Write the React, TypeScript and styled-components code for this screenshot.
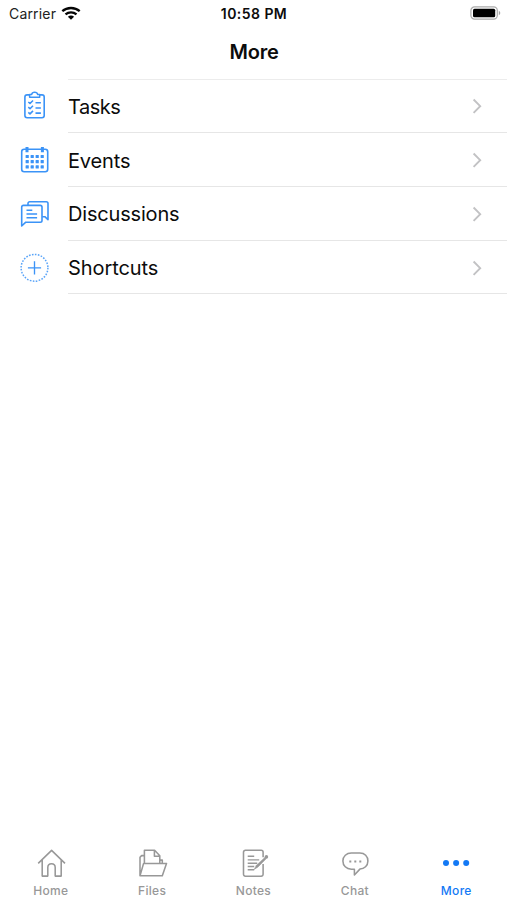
import React from "react";
import styled, { createGlobalStyle } from "styled-components";

const GlobalStyle = createGlobalStyle`
  * { box-sizing: border-box; }
  body { margin: 0; background: #fff; }
`;

const BLUE = "#3b93f7";

const Screen = styled.div`
  width: 100%;
  height: 100vh;
  display: flex;
  flex-direction: column;
  overflow: hidden;
  background: #fff;
  color: #0c0c0c;
  font-family: Inter, "Liberation Sans", sans-serif;
`;

const StatusBar = styled.header`
  display: grid;
  grid-template-columns: 1fr auto 1fr;
  align-items: center;
  height: 27px;
  padding: 0 6px 0 9px;
`;

const Carrier = styled.div`
  display: flex;
  align-items: center;
  gap: 5px;
  font-size: 14px;
  letter-spacing: 0.17px;
  color: #222;

  svg {
    margin-bottom: 1px;
  }
`;

const Clock = styled.time`
  margin-right: 2px;
  font-size: 14px;
  font-weight: 600;
  letter-spacing: 0.45px;
`;

const Battery = styled.div`
  display: flex;
  justify-content: flex-end;
  padding-bottom: 1px;
`;

const Title = styled.h1`
  height: 52.4px;
  margin: 0;
  padding-left: 1px;
  line-height: 50px;
  text-align: center;
  font-size: 20px;
  font-weight: 600;
  letter-spacing: -0.2px;
`;

const List = styled.ul`
  flex: 1;
  list-style: none;
  margin: 0;
  padding: 0;
`;

const Row = styled.li`
  display: flex;
  height: 53.75px;
`;

const IconCell = styled.div`
  width: 68px;
  display: flex;
  align-items: center;
  justify-content: center;
`;

const RowBody = styled.div<{ $first: boolean }>`
  flex: 1;
  display: flex;
  align-items: center;
  justify-content: space-between;
  padding: 1px 24px 0 0;
  border-bottom: 1px solid #e6e6e6;
  box-shadow: ${(p) => (p.$first ? "inset 0 1px 0 #ececec" : "none")};
`;

const Label = styled.span<{ $track: number }>`
  padding-top: 1px;
  font-size: 20px;
  letter-spacing: ${(p) => p.$track}px;
`;

const TabBar = styled.nav`
  display: grid;
  grid-template-columns: repeat(5, 1fr);
  height: 60px;
`;

const Tab = styled.div<{ $active?: boolean }>`
  display: flex;
  flex-direction: column;
  align-items: center;
  color: ${(p) => (p.$active ? "#1379f5" : "#989898")};
`;

const TabLabel = styled.span`
  margin-top: 2px;
  font-size: 12px;
  line-height: 14px;
  font-weight: 500;
  letter-spacing: 0.3px;
`;

const RowIcon = ({ children }: { children: React.ReactNode }) => (
  <svg width="40" height="40" viewBox="0 0 40 40" fill="none" stroke={BLUE} strokeWidth="1.6" strokeLinejoin="round">
    {children}
  </svg>
);

const TasksIcon = () => (
  <RowIcon>
    <rect x="10.9" y="8.9" width="19.3" height="22.8" rx="2.2" />
    <path d="M15.6 11.2V8.4h2.1c.5-2.8 5.4-2.8 5.9 0h2.1v2.8z" fill="#fff" strokeWidth="1.5" />
    <path d="M14.3 16l1.7 1.5 3-3M14.3 21.2l1.7 1.5 3-3M14.3 26.4l1.7 1.5 3-3M21.5 16.7h5.4M21.5 21.9h5.4M21.5 27.1h5.4" strokeWidth="1.55" />
  </RowIcon>
);

const EventsIcon = () => (
  <RowIcon>
    <rect x="7.7" y="9.2" width="26" height="22.6" rx="2.5" />
    <path d="M13 6.9v5.3M28.4 6.9v5.3" strokeWidth="3" strokeLinecap="butt" />
    {[16.5, 21.7, 26.9].map((y) =>
      [13.2, 18.2, 23.2, 28.2].map((x) => (
        <rect key={`${x}-${y}`} x={x - 1.6} y={y - 1.6} width="3.2" height="3.2" rx=".5" fill={BLUE} stroke="none" />
      ))
    )}
  </RowIcon>
);

const DiscussionsIcon = () => (
  <RowIcon>
    <path d="M14 11V9.5a1.7 1.7 0 0 1 1.7-1.7h16.6A1.7 1.7 0 0 1 34 9.5v16.2l-3.2-3h-2.6" />
    <path d="M7.7 32V13.1a1.7 1.7 0 0 1 1.7-1.7h16.9a1.7 1.7 0 0 1 1.7 1.7v13.4a1.7 1.7 0 0 1-1.7 1.7H11.8z" />
    <path d="M12.5 16.3h5.8M12.5 20h10.6M12.5 23.7h10.6" strokeWidth="1.5" />
  </RowIcon>
);

const ShortcutsIcon = () => (
  <RowIcon>
    <circle cx="20.5" cy="19.8" r="13.4" strokeWidth="1.5" strokeDasharray="1.6 1.407" opacity=".85" />
    <path d="M20.5 13.2v13.2M13.9 19.8h13.2" strokeWidth="1.35" />
  </RowIcon>
);

const Chevron = () => (
  <svg width="12" height="18" viewBox="0 0 12 18" fill="none" stroke="#c2c2c4" strokeWidth="1.9">
    <path d="M2.6 2.5 9.2 9.2l-6.6 6.7" />
  </svg>
);

const WifiIcon = () => (
  <svg width="20" height="14" viewBox="0 0 20 14" fill="none" stroke="#050505" strokeWidth="2.3">
    <path d="M1.3 5.2c4.8-4.3 12.6-4.3 17.4 0M4.5 8.4c3.2-2.8 7.8-2.8 11 0" />
    <path d="M6.9 10.8c1.8-1.6 4.4-1.6 6.2 0L10 13.8z" fill="#050505" stroke="none" />
  </svg>
);

const BatteryIcon = () => (
  <svg width="31" height="14" viewBox="0 0 31 14">
    <rect x=".9" y=".9" width="26.4" height="12.2" rx="3.6" fill="#fff" stroke="#ababab" strokeWidth="1.2" />
    <rect x="3" y="2.8" width="22.2" height="8.4" rx="1.5" fill="#000" />
    <path d="M28.8 4.8c2 .8 2 3.6 0 4.4z" fill="#a5a5a5" />
  </svg>
);

const TabIcon = ({ children }: { children: React.ReactNode }) => (
  <svg width="36" height="42" viewBox="0 0 36 42" fill="none" stroke="currentColor" strokeWidth="1.55" strokeLinejoin="round">
    {children}
  </svg>
);

const HomeIcon = () => (
  <TabIcon>
    <path d="M5.2 23.4 18.6 10.4 32 23.4M9.2 20v16.1h5.6V27.5c0-5.1 7.4-5.1 7.4 0v8.6h6V20" />
  </TabIcon>
);

const FilesIcon = () => (
  <TabIcon>
    <path d="M10.4 23.6V10.3h10.2l5.2 5.4v7.9M20.4 10.3v6h5.4M10.4 15.6H7.6l-1.6 1.7v18.4h22.3l4.2-12.3H9.6L6 35.7M25.8 20.1h2.5v3.3" />
  </TabIcon>
);

const NotesIcon = () => (
  <TabIcon>
    <path d="M28.1 24v10.3a1.9 1.9 0 0 1-1.9 1.9H10.4a1.9 1.9 0 0 1-1.9-1.9V12.2a1.9 1.9 0 0 1 1.9-1.9h15.8a1.9 1.9 0 0 1 1.9 1.9v5" />
    <path d="M12.7 16.3h6.5M12.7 19.9h11.5M12.7 23.2h9.5M12.7 26.5h6.5M12.7 29.8h6.5" strokeWidth="1.4" />
    <path d="m19.2 29.4 2.2-4.2 8.5-7.8 1.3 1.3-8.1 8.2z" fill="currentColor" strokeWidth=".5" />
    <circle cx="31.4" cy="16.9" r="1.8" fill="currentColor" stroke="none" />
  </TabIcon>
);

const ChatIcon = () => (
  <TabIcon>
    <path d="M14.3 13h8.6c4.8 0 8 3.4 8 7.9 0 4.9-3.6 7.9-8 8.2L17.4 35v-5.8h-3.1c-5 0-8.4-3.6-8.4-8.3 0-4.5 3.6-7.9 8.4-7.9z" />
    <path d="M12.3 21.6h2M17.3 21.6h2M22.3 21.6h2" strokeWidth="2" />
  </TabIcon>
);

const MoreIcon = () => (
  <TabIcon>
    <g fill="currentColor" stroke="none">
      <circle cx="8" cy="23" r="3" />
      <circle cx="18.1" cy="23" r="3" />
      <circle cx="28.2" cy="23" r="3" />
    </g>
  </TabIcon>
);

const rows = [
  { name: "Tasks", Icon: TasksIcon, track: -0.5 },
  { name: "Events", Icon: EventsIcon, track: -0.15 },
  { name: "Discussions", Icon: DiscussionsIcon, track: -0.18 },
  { name: "Shortcuts", Icon: ShortcutsIcon, track: -0.08 },
];

const tabs = [
  { name: "Home", Icon: HomeIcon },
  { name: "Files", Icon: FilesIcon },
  { name: "Notes", Icon: NotesIcon },
  { name: "Chat", Icon: ChatIcon },
  { name: "More", Icon: MoreIcon, active: true },
];

export default function App() {
  return (
    <Screen>
      <GlobalStyle />
      <StatusBar>
        <Carrier>
          Carrier
          <WifiIcon />
        </Carrier>
        <Clock>10:58 PM</Clock>
        <Battery>
          <BatteryIcon />
        </Battery>
      </StatusBar>
      <Title>More</Title>
      <List>
        {rows.map(({ name, Icon, track }, i) => (
          <Row key={name}>
            <IconCell>
              <Icon />
            </IconCell>
            <RowBody $first={i === 0}>
              <Label $track={track}>{name}</Label>
              <Chevron />
            </RowBody>
          </Row>
        ))}
      </List>
      <TabBar>
        {tabs.map(({ name, Icon, active }) => (
          <Tab key={name} $active={active}>
            <Icon />
            <TabLabel>{name}</TabLabel>
          </Tab>
        ))}
      </TabBar>
    </Screen>
  );
}
